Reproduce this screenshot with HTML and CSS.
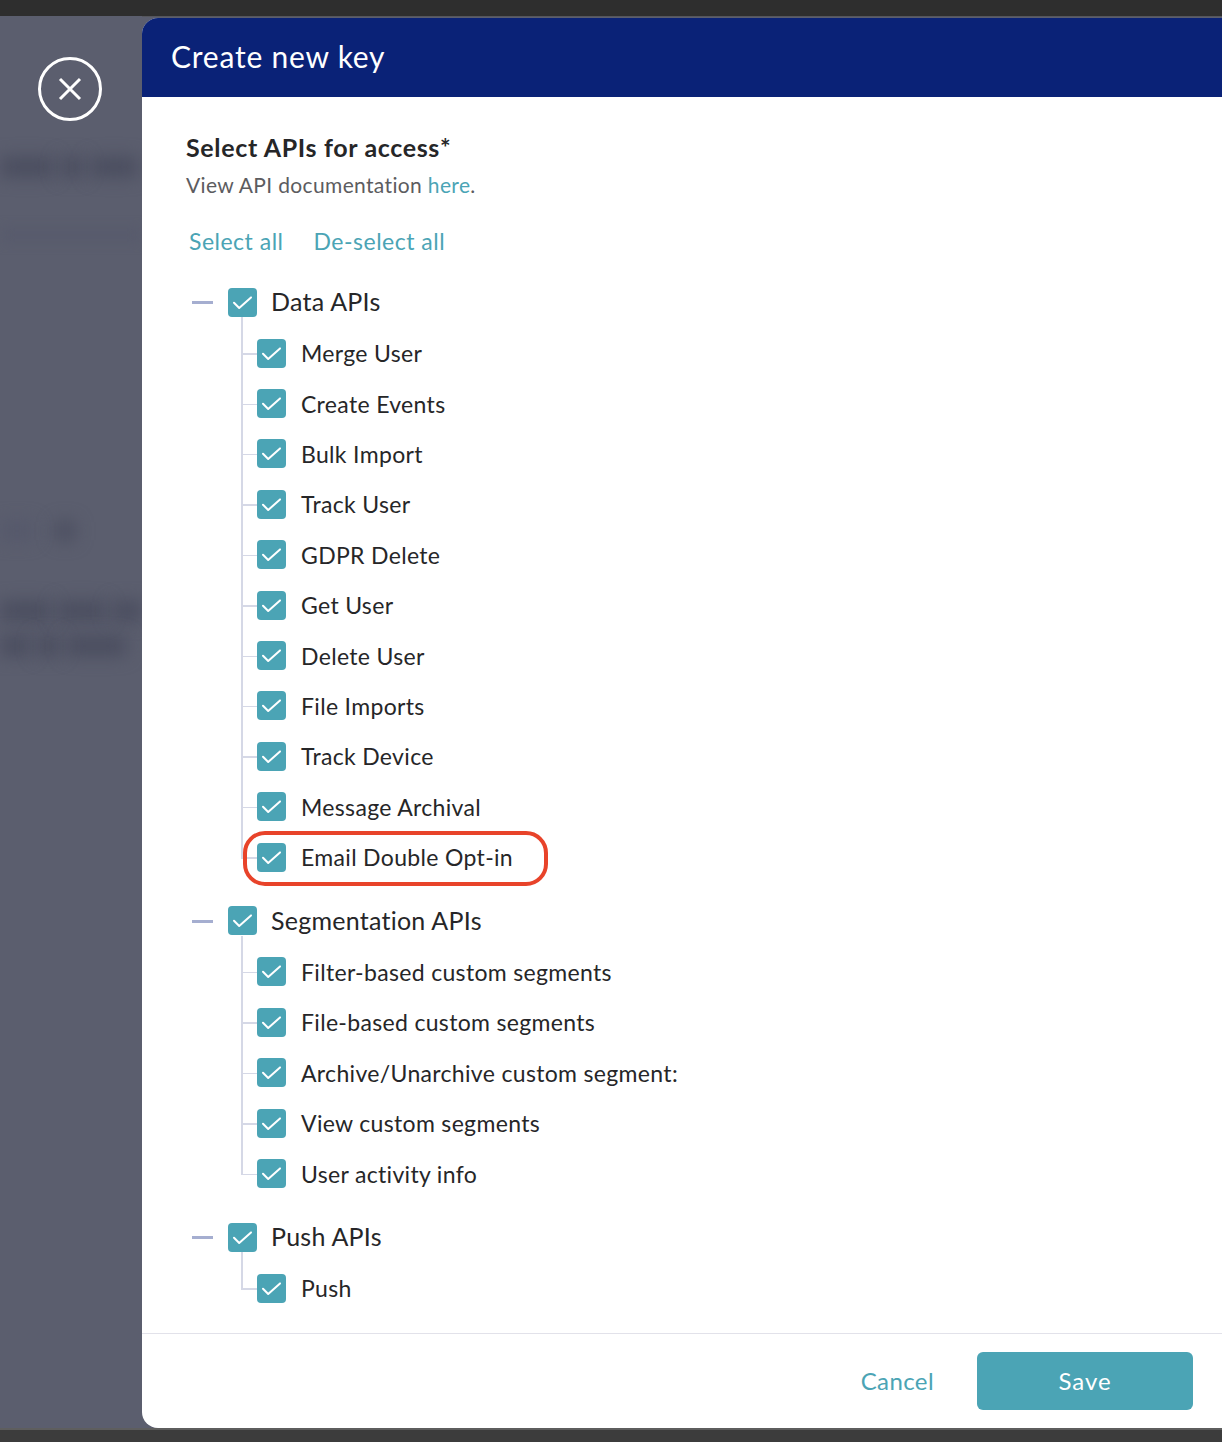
FILE: index.html
```html
<!DOCTYPE html>
<html lang="en">
<head>
<meta charset="utf-8">
<title>Create new key</title>
<link rel="stylesheet" href="styles.css">
</head>
<body>
<svg class="defs" width="0" height="0" aria-hidden="true">
  <symbol id="check" viewBox="0 0 29 29"><path d="M6 14.8l5.2 5.2L23 9.4" fill="none" stroke="#fff" stroke-width="2" stroke-linecap="round" stroke-linejoin="round"/></symbol>
</svg>
<div class="topbar"></div>
<main class="stage">
  <aside class="backdrop">
    <button class="close" aria-label="Close">
      <svg width="64" height="64" viewBox="0 0 64 64"><circle cx="32" cy="32" r="30.5" fill="none" stroke="#fff" stroke-width="3"/><path d="M22 22l20 20M42 22L22 42" stroke="#fff" stroke-width="3" fill="none"/></svg>
    </button>
    <div class="ghost ghost-a"><i class="w50"></i><i class="w20"></i><i class="w42"></i></div>
    <div class="ghost ghost-b"><i class="wfull"></i></div>
    <div class="ghost ghost-c"><i class="w30 faint"></i><i class="w12"></i></div>
    <div class="ghost ghost-d"><i class="w48"></i><i class="w46"></i><i class="w24"></i></div>
    <div class="ghost ghost-e"><i class="w25"></i><i class="w20"></i><i class="w55"></i></div>
  </aside>
  <section class="panel">
    <header class="panel-head"><h1>Create new key</h1></header>
    <div class="panel-body">
      <h2>Select APIs for access*</h2>
      <p class="sub">View API documentation <a href="#">here</a>.</p>
      <div class="bulk"><a href="#">Select all</a><a href="#">De-select all</a></div>
      <div class="group">
        <div class="parent"><span class="dash"></span><span class="box"><svg><use href="#check"/></svg></span><span>Data APIs</span></div>
        <ul class="children">
          <li><span class="box"><svg><use href="#check"/></svg></span><span>Merge User</span></li>
          <li><span class="box"><svg><use href="#check"/></svg></span><span>Create Events</span></li>
          <li><span class="box"><svg><use href="#check"/></svg></span><span>Bulk Import</span></li>
          <li><span class="box"><svg><use href="#check"/></svg></span><span>Track User</span></li>
          <li><span class="box"><svg><use href="#check"/></svg></span><span>GDPR Delete</span></li>
          <li><span class="box"><svg><use href="#check"/></svg></span><span>Get User</span></li>
          <li><span class="box"><svg><use href="#check"/></svg></span><span>Delete User</span></li>
          <li><span class="box"><svg><use href="#check"/></svg></span><span>File Imports</span></li>
          <li><span class="box"><svg><use href="#check"/></svg></span><span>Track Device</span></li>
          <li><span class="box"><svg><use href="#check"/></svg></span><span>Message Archival</span></li>
          <li><span class="box"><svg><use href="#check"/></svg></span><span>Email Double Opt-in</span><span class="highlight"></span></li>
        </ul>
      </div>
      <div class="group">
        <div class="parent"><span class="dash"></span><span class="box"><svg><use href="#check"/></svg></span><span>Segmentation APIs</span></div>
        <ul class="children">
          <li><span class="box"><svg><use href="#check"/></svg></span><span>Filter-based custom segments</span></li>
          <li><span class="box"><svg><use href="#check"/></svg></span><span>File-based custom segments</span></li>
          <li><span class="box"><svg><use href="#check"/></svg></span><span>Archive/Unarchive custom segment:</span></li>
          <li><span class="box"><svg><use href="#check"/></svg></span><span>View custom segments</span></li>
          <li><span class="box"><svg><use href="#check"/></svg></span><span>User activity info</span></li>
        </ul>
      </div>
      <div class="group">
        <div class="parent"><span class="dash"></span><span class="box"><svg><use href="#check"/></svg></span><span>Push APIs</span></div>
        <ul class="children">
          <li><span class="box"><svg><use href="#check"/></svg></span><span>Push</span></li>
        </ul>
      </div>
    </div>
    <footer class="panel-foot">
      <a class="cancel" href="#">Cancel</a>
      <button class="save">Save</button>
    </footer>
  </section>
</main>
<div class="bottombar"></div>
</body>
</html>
```
FILE: styles.css
```css
* { box-sizing: border-box; }
html, body { margin: 0; height: 100%; }
body {
  display: flex;
  flex-direction: column;
  height: 1442px;
  overflow: hidden;
  font-family: "Lato", "Noto Sans", sans-serif;
  color: #262628;
  background: #5b5e6e;
}
.defs { position: absolute; }
.topbar { height: 16px; background: #2e2e2e; flex: none; box-shadow: 0 1px 0 #55565c; }
.bottombar { height: 14px; background: #3c3c3c; border-top: 2px solid #5e5e5e; flex: none; }
.stage { flex: 1; display: flex; min-height: 0; }

.backdrop {
  width: 142px;
  flex: none;
  overflow: hidden;
  padding-top: 41px;
  background: #5b5e6e;
}
.close { display: block; padding: 0; border: 0; background: none; height: 64px; width: 64px; margin-left: 38px; }
.close svg { display: block; }
.ghost { display: flex; gap: 6px; height: 18px; }
.ghost i { display: block; height: 100%; background: #484b5d; filter: blur(9px); }
.ghost-a { margin-top: 37px; }
.ghost-b { margin-top: 55px; height: 8px; }
.ghost-b i { background: #55586b; filter: blur(7px); }
.ghost-c { margin-top: 283px; gap: 22px; }
.ghost-d { margin-top: 62px; }
.ghost-e { margin-top: 17px; }
.ghost i.faint { background: #55586b; }
.w12 { width: 18px; }
.w20 { width: 24px; }
.w24 { width: 30px; }
.w25 { width: 30px; }
.w30 { width: 34px; }
.w42 { width: 48px; }
.w46 { width: 50px; }
.w48 { width: 52px; }
.w50 { width: 54px; }
.w55 { width: 60px; }
.wfull { width: 100%; }

.panel {
  flex: 1;
  display: flex;
  flex-direction: column;
  min-width: 0;
  margin-top: 2px;
  background: #fff;
  border-radius: 16px 0 0 16px;
  overflow: hidden;
}
.panel-head { height: 79px; flex: none; background: #0a2277; display: flex; align-items: center; padding: 0 29px 4px; }
h1 { margin: 0; color: #fff; font-size: 30px; font-weight: 400; letter-spacing: .78px; }
.panel-body { flex: 1; padding: 34px 0 0 44px; }
h2 { margin: 0; font-size: 25px; line-height: 32px; font-weight: 700; letter-spacing: .65px; }
.sub { margin: 8px 0 0; font-size: 21px; line-height: 28px; color: #5c5c60; letter-spacing: .35px; }
a { color: #4ba4b5; text-decoration: none; }
.bulk { display: flex; gap: 30px; margin: 27px 0 0 3px; font-size: 23px; line-height: 30px; letter-spacing: .5px; }

.group { margin-top: 31px; }
.group + .group { margin-top: 23.5px; }
.parent, .children li { display: flex; align-items: center; position: relative; }
.parent { height: 30px; padding-left: 42px; gap: 14px; font-size: 25px; letter-spacing: .25px; }
.parent > span:last-child { margin-top: -2px; }
.dash { position: absolute; left: 6px; top: 14px; width: 21px; height: 3px; background: #a5aed0; }
.box { width: 29px; height: 29px; flex: none; border-radius: 4px; background: #4ba4b5; display: block; }
.box svg { display: block; width: 29px; height: 29px; }
.children { list-style: none; margin: 11px 0 0; padding: 0 0 0 55px; position: relative; }
.children li { height: 50.4px; padding-left: 16px; gap: 15px; font-size: 23px; letter-spacing: .33px; }
.children li::before { content: ""; position: absolute; left: 0; top: 0; bottom: 0; width: 1.5px; background: #d5d8e6; }
.children li:first-child::before { top: -11px; }
.children li:last-child::before { bottom: 50%; }
.children li:only-child::before { top: -11px; bottom: 50%; }
.children li::after { content: ""; position: absolute; left: 0; top: 50%; width: 16px; height: 1.5px; background: #d5d8e6; }
.highlight { position: absolute; left: 2px; top: -1px; width: 305px; height: 55px; border: 4px solid #e8432a; border-radius: 22px; z-index: 1; }

.panel-foot {
  flex: none;
  height: 95px;
  border-top: 1px solid #e2e2ea;
  display: flex;
  justify-content: flex-end;
  align-items: center;
  padding: 0 29px 0 0;
  gap: 43px;
}
.cancel { font-size: 24px; letter-spacing: .4px; margin-top: -2px; }
.save { width: 216px; height: 58px; border: 0; border-radius: 6px; background: #4ba4b5; color: #fff; font: 400 24px "Lato", sans-serif; letter-spacing: .95px; padding-bottom: 2px; }
```
